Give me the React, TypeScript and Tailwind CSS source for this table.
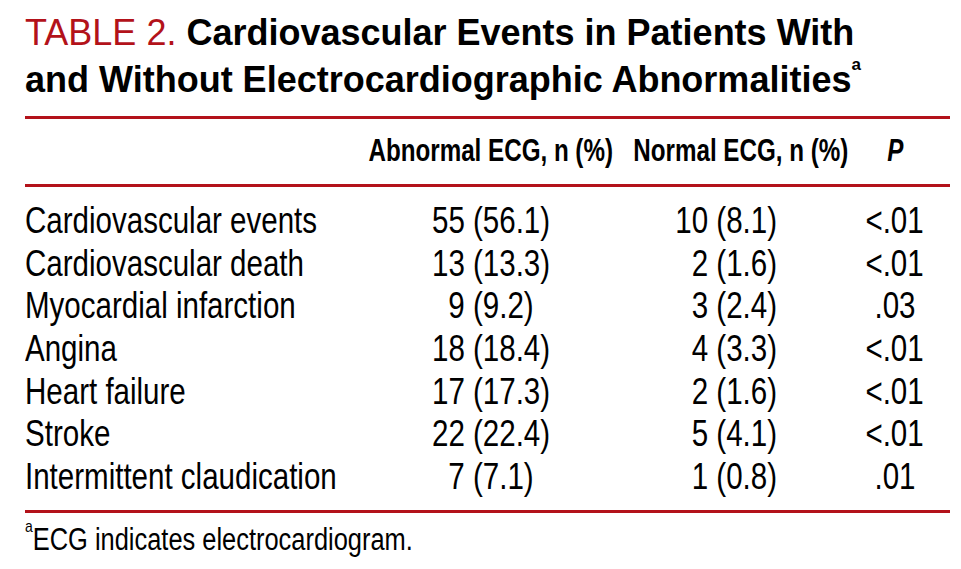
const rows = [
  ["Cardiovascular events", "55 (56.1)", "10 (8.1)", "<.01"],
  ["Cardiovascular death", "13 (13.3)", "2 (1.6)", "<.01"],
  ["Myocardial infarction", "9 (9.2)", "3 (2.4)", ".03"],
  ["Angina", "18 (18.4)", "4 (3.3)", "<.01"],
  ["Heart failure", "17 (17.3)", "2 (1.6)", "<.01"],
  ["Stroke", "22 (22.4)", "5 (4.1)", "<.01"],
  ["Intermittent claudication", "7 (7.1)", "1 (0.8)", ".01"],
];

// no condensed face installed, so squeeze Liberation Sans
const cond = "inline-block whitespace-nowrap scale-x-[0.82]";
const head = "inline-block whitespace-nowrap scale-x-[0.78]";

export default function App() {
  return (
    <div className="w-[961px] h-[569px] bg-white text-black px-[25px] pt-[9px] overflow-hidden font-['Liberation_Sans',Arial,sans-serif]">
      <h1 className="text-[36px] leading-[47px] font-bold">
        <span className="font-normal text-[#b3121a]">TABLE 2. </span>
        Cardiovascular Events in Patients With
        <br />
        and Without Electrocardiographic Abnormalities
        <sup className="text-[17px] align-[14px] leading-none">a</sup>
      </h1>

      <div className="mt-[13px] w-[925px] h-[3px] bg-[#b3121a]" />

      <div className="flex items-center h-[65px] text-[31px] font-bold">
        <div className="w-[340px] shrink-0" />
        <div className="w-[252px] shrink-0 flex justify-center">
          <span className={head}>Abnormal ECG, n (%)</span>
        </div>
        <div className="w-[248px] shrink-0 flex justify-center">
          <span className={head}>Normal ECG, n (%)</span>
        </div>
        <div className="w-[60px] shrink-0 flex justify-center italic">
          <span className={head}>P</span>
        </div>
      </div>

      <div className="w-[925px] h-[3px] bg-[#b3121a]" />

      <div className="text-[36px] leading-[42.67px] pt-[13px] pb-[11px]">
        {rows.map((r) => (
          <div key={r[0]} className="flex">
            <div className="w-[340px] shrink-0">
              <span className={`${cond} origin-left`}>{r[0]}</span>
            </div>
            <div className="w-[252px] shrink-0 flex justify-center">
              <span className={cond}>{r[1]}</span>
            </div>
            <div className="w-[248px] shrink-0 flex justify-end pr-[88px]">
              <span className={`${cond} origin-right`}>{r[2]}</span>
            </div>
            <div className="w-[60px] shrink-0 flex justify-center">
              <span className={cond}>{r[3]}</span>
            </div>
          </div>
        ))}
      </div>

      <div className="w-[925px] h-[3px] bg-[#b3121a]" />

      <p className="text-[31px] leading-[40px] pt-[7px]">
        <span className={`${cond} origin-left`}>
          <sup className="text-[17px] align-[9px] leading-none">a</sup>ECG indicates electrocardiogram.
        </span>
      </p>
    </div>
  );
}
